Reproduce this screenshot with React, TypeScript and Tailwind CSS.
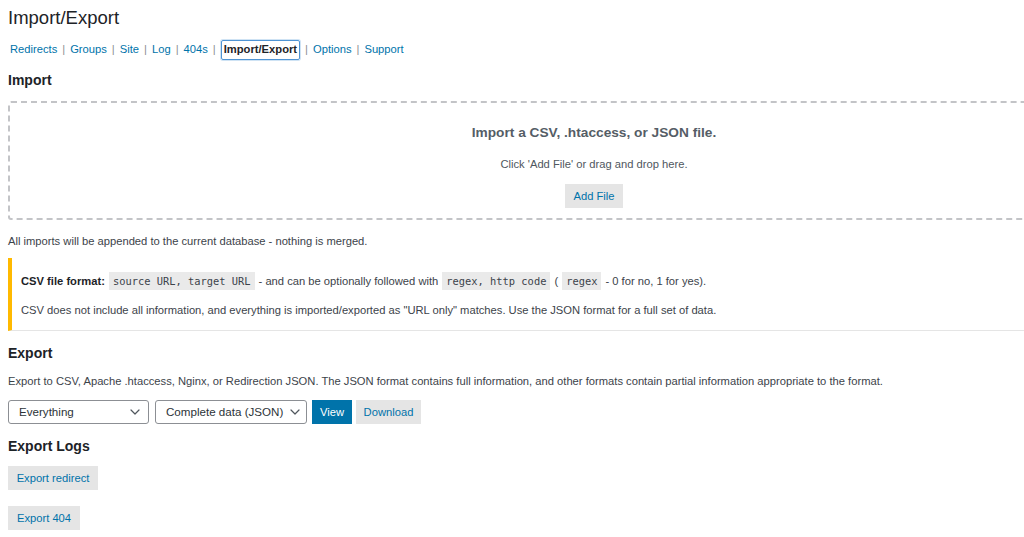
import React from "react";

const font = { fontFamily: '"Liberation Sans", Arial, sans-serif' };

function Chevron() {
  return (
    <svg width="10" height="6" viewBox="0 0 10 6" fill="none" className="shrink-0">
      <path d="M1 1l4 4 4-4" stroke="#50575e" strokeWidth="1.2" strokeLinecap="round" strokeLinejoin="round" />
    </svg>
  );
}

function Code({ children }: { children: React.ReactNode }) {
  return (
    <code className="bg-[#eaeaea] px-[4px] py-[2px] text-[10.4px] text-[#3c434a]" style={{ fontFamily: '"DejaVu Sans Mono", "Liberation Mono", monospace' }}>
      {children}
    </code>
  );
}

export default function App() {
  const navItems = ["Redirects", "Groups", "Site", "Log", "404s", "Import/Export", "Options", "Support"];
  return (
    <div className="w-[1024px] h-[537px] overflow-hidden bg-white" style={font}>
      <div className="w-[1180px] pl-[8px] text-[#3c434a] text-[11.2px]">
        <h1 className="pt-[7px] text-[18.5px] leading-[22px] text-[#1d2327]">Import/Export</h1>
        <div className="mt-[10px] flex items-center h-[20px] text-[11.2px] pt-[1px]">
          {navItems.map((n, i) => (
            <React.Fragment key={n}>
              {i > 0 && <span className="mx-[5px] text-[#8c8f94]">|</span>}
              {n === "Import/Export" ? (
                <span className="h-[20px] flex items-center px-[2px] border border-[#4f94d4] rounded-[2px] font-bold text-[#1d2327] shadow-[0_0_0_1px_#cfe3f4]">
                  {n}
                </span>
              ) : (
                <span className={`text-[#0073aa] ${i === 0 ? "ml-[2px]" : ""}`}>{n}</span>
              )}
            </React.Fragment>
          ))}
        </div>
        <h2 className="mt-[12px] text-[14px] leading-[18px] font-bold text-[#1d2327]">Import</h2>
        <div className="mt-[12px] h-[119px] border-2 border-dashed border-[#c3c4c7] rounded-[3px] flex flex-col items-center">
          <div className="mt-[21px] text-[13.7px] leading-[18px] font-bold text-[#555d66]">Import a CSV, .htaccess, or JSON file.</div>
          <div className="mt-[15px] text-[11.2px] leading-[14px] text-[#50575e]">Click 'Add File' or drag and drop here.</div>
          <div className="mt-[13px] h-[24px] px-[8px] flex items-center bg-[#e5e5e5] text-[#0073aa] text-[11.2px]">Add File</div>
        </div>
        <p className="mt-[14px] leading-[14px]">All imports will be appended to the current database - nothing is merged.</p>
        <div className="mt-[10px] h-[73px] border-l-4 border-[#ffb900] border-b border-b-[#e5e5e5] pl-[9px] flex flex-col justify-center gap-[13px]">
          <div className="flex items-center leading-[14px] gap-[4px]">
            <span className="font-bold text-[#1d2327]">CSV file format:</span>
            <Code>source URL, target URL</Code>
            <span>- and can be optionally followed with</span>
            <Code>regex, http code</Code>
            <span>(</span>
            <Code>regex</Code>
            <span>- 0 for no, 1 for yes).</span>
          </div>
          <div className="leading-[14px]">CSV does not include all information, and everything is imported/exported as "URL only" matches. Use the JSON format for a full set of data.</div>
        </div>
        <h2 className="mt-[13px] text-[14px] leading-[18px] font-bold text-[#1d2327]">Export</h2>
        <p className="mt-[12px] leading-[14px]">Export to CSV, Apache .htaccess, Nginx, or Redirection JSON. The JSON format contains full information, and other formats contain partial information appropriate to the format.</p>
        <div className="mt-[12px] flex items-center h-[24px]">
          <div className="w-[141px] h-[24px] border border-[#8c8f94] rounded-[3px] flex items-center justify-between pl-[10px] pr-[8px] text-[11.6px] text-[#2c3338]">
            <span>Everything</span>
            <Chevron />
          </div>
          <div className="ml-[6px] w-[152px] h-[24px] border border-[#8c8f94] rounded-[3px] flex items-center justify-between pl-[10px] pr-[6px] text-[11.6px] text-[#2c3338]">
            <span>Complete data (JSON)</span>
            <Chevron />
          </div>
          <div className="ml-[5px] w-[40px] h-[24px] bg-[#0073aa] text-white flex items-center justify-center text-[11.2px]">View</div>
          <div className="ml-[4px] w-[65px] h-[24px] bg-[#e5e5e5] text-[#0073aa] flex items-center justify-center text-[11.2px]">Download</div>
        </div>
        <h2 className="mt-[13px] text-[14px] leading-[18px] font-bold text-[#1d2327]">Export Logs</h2>
        <div className="mt-[11px] w-[90px] h-[24px] bg-[#e5e5e5] text-[#0073aa] flex items-center justify-center text-[11.2px]">Export redirect</div>
        <div className="mt-[16px] w-[72px] h-[24px] bg-[#e5e5e5] text-[#0073aa] flex items-center justify-center text-[11.2px]">Export 404</div>
      </div>
    </div>
  );
}
